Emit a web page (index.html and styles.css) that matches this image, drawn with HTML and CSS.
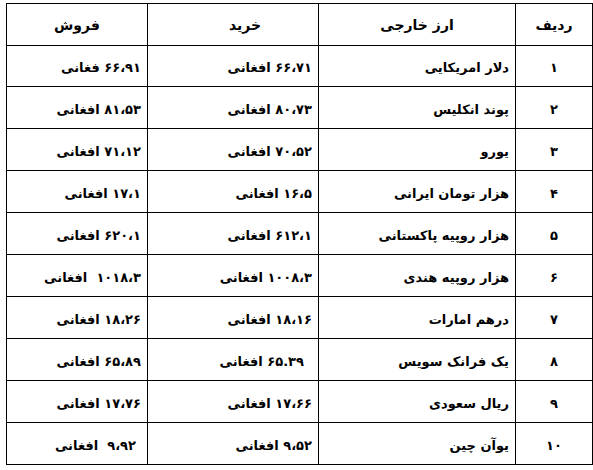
FILE: index.html
```html
<!DOCTYPE html>
<html lang="fa" dir="rtl">
<head>
<meta charset="utf-8">
<title>نرخ اسعار</title>
<link rel="stylesheet" href="styles.css">
</head>
<body>
<div class="rates" role="table">
  <div class="row head" role="row">
    <div class="cell idx" role="columnheader">ردیف</div>
    <div class="cell center" role="columnheader">ارز خارجی</div>
    <div class="cell center h-buy" role="columnheader">خرید</div>
    <div class="cell center" role="columnheader">فروش</div>
  </div>
  <div class="row first" role="row"><div class="cell idx">۱</div><div class="cell">دلار امریکایی</div><div class="cell">۶۶،۷۱ افغانی</div><div class="cell">۶۶،۹۱ فغانی</div></div>
  <div class="row" role="row"><div class="cell idx">۲</div><div class="cell">پوند انکلیس</div><div class="cell">۸۰،۷۳ افغانی</div><div class="cell">۸۱،۵۳ افغانی</div></div>
  <div class="row" role="row"><div class="cell idx">۳</div><div class="cell">یورو</div><div class="cell">۷۰،۵۲ افغانی</div><div class="cell">۷۱،۱۲ افغانی</div></div>
  <div class="row" role="row"><div class="cell idx">۴</div><div class="cell">هزار تومان ایرانی</div><div class="cell">۱۶،۵ افغانی</div><div class="cell">۱۷،۱ افغانی</div></div>
  <div class="row" role="row"><div class="cell idx">۵</div><div class="cell">هزار روپیه پاکستانی</div><div class="cell">۶۱۲،۱ افغانی</div><div class="cell">۶۲۰،۱ افغانی</div></div>
  <div class="row" role="row"><div class="cell idx">۶</div><div class="cell">هزار روپیه هندی</div><div class="cell">۱۰۰۸،۳ افغانی</div><div class="cell">۱۰۱۸،۳&nbsp; افغانی</div></div>
  <div class="row" role="row"><div class="cell idx">۷</div><div class="cell">درهم امارات</div><div class="cell">۱۸،۱۶ افغانی</div><div class="cell">۱۸،۲۶ افغانی</div></div>
  <div class="row" role="row"><div class="cell idx">۸</div><div class="cell">یک فرانک سویس</div><div class="cell pad-more">۶۵.۳۹ افغانی</div><div class="cell">۶۵،۸۹ افغانی</div></div>
  <div class="row" role="row"><div class="cell idx">۹</div><div class="cell">ریال سعودی</div><div class="cell">۱۷،۶۶ افغانی</div><div class="cell">۱۷،۷۶ افغانی</div></div>
  <div class="row" role="row"><div class="cell idx">۱۰</div><div class="cell">یوآن چین</div><div class="cell">۹،۵۲ افغانی</div><div class="cell pad-some">۹،۹۲&nbsp; افغانی</div></div>
</div>
</body>
</html>
```
FILE: styles.css
```css
html, body {
  background: #ffffff;
}
body {
  margin: 3px 0 0 2px;
  font-family: "DejaVu Sans", "Noto Sans", sans-serif;
  color: #000;
}
.rates {
  direction: rtl;
  width: 587px;
  box-sizing: border-box;
  border-top: 1px solid #000;
  border-right: 1px solid #000;
}
.row {
  display: grid;
  grid-template-columns: 77px 197px 171px 141px;
  height: 42px;
}
.row.first {
  height: 41px;
}
.cell {
  display: flex;
  align-items: center;
  justify-content: flex-start;
  box-sizing: border-box;
  border-left: 1px solid #000;
  border-bottom: 1px solid #000;
  padding: 3px 6px 0 6px;
  font-size: 13px;
  font-weight: bold;
  white-space: nowrap;
}
.head .cell {
  font-size: 14px;
  padding-top: 0;
  justify-content: center;
}
.cell.idx {
  justify-content: center;
}
.head .cell.h-buy {
  padding-left: 30px;
}
.cell.pad-more {
  padding-right: 14px;
}
.cell.pad-some {
  padding-right: 11px;
}
```
